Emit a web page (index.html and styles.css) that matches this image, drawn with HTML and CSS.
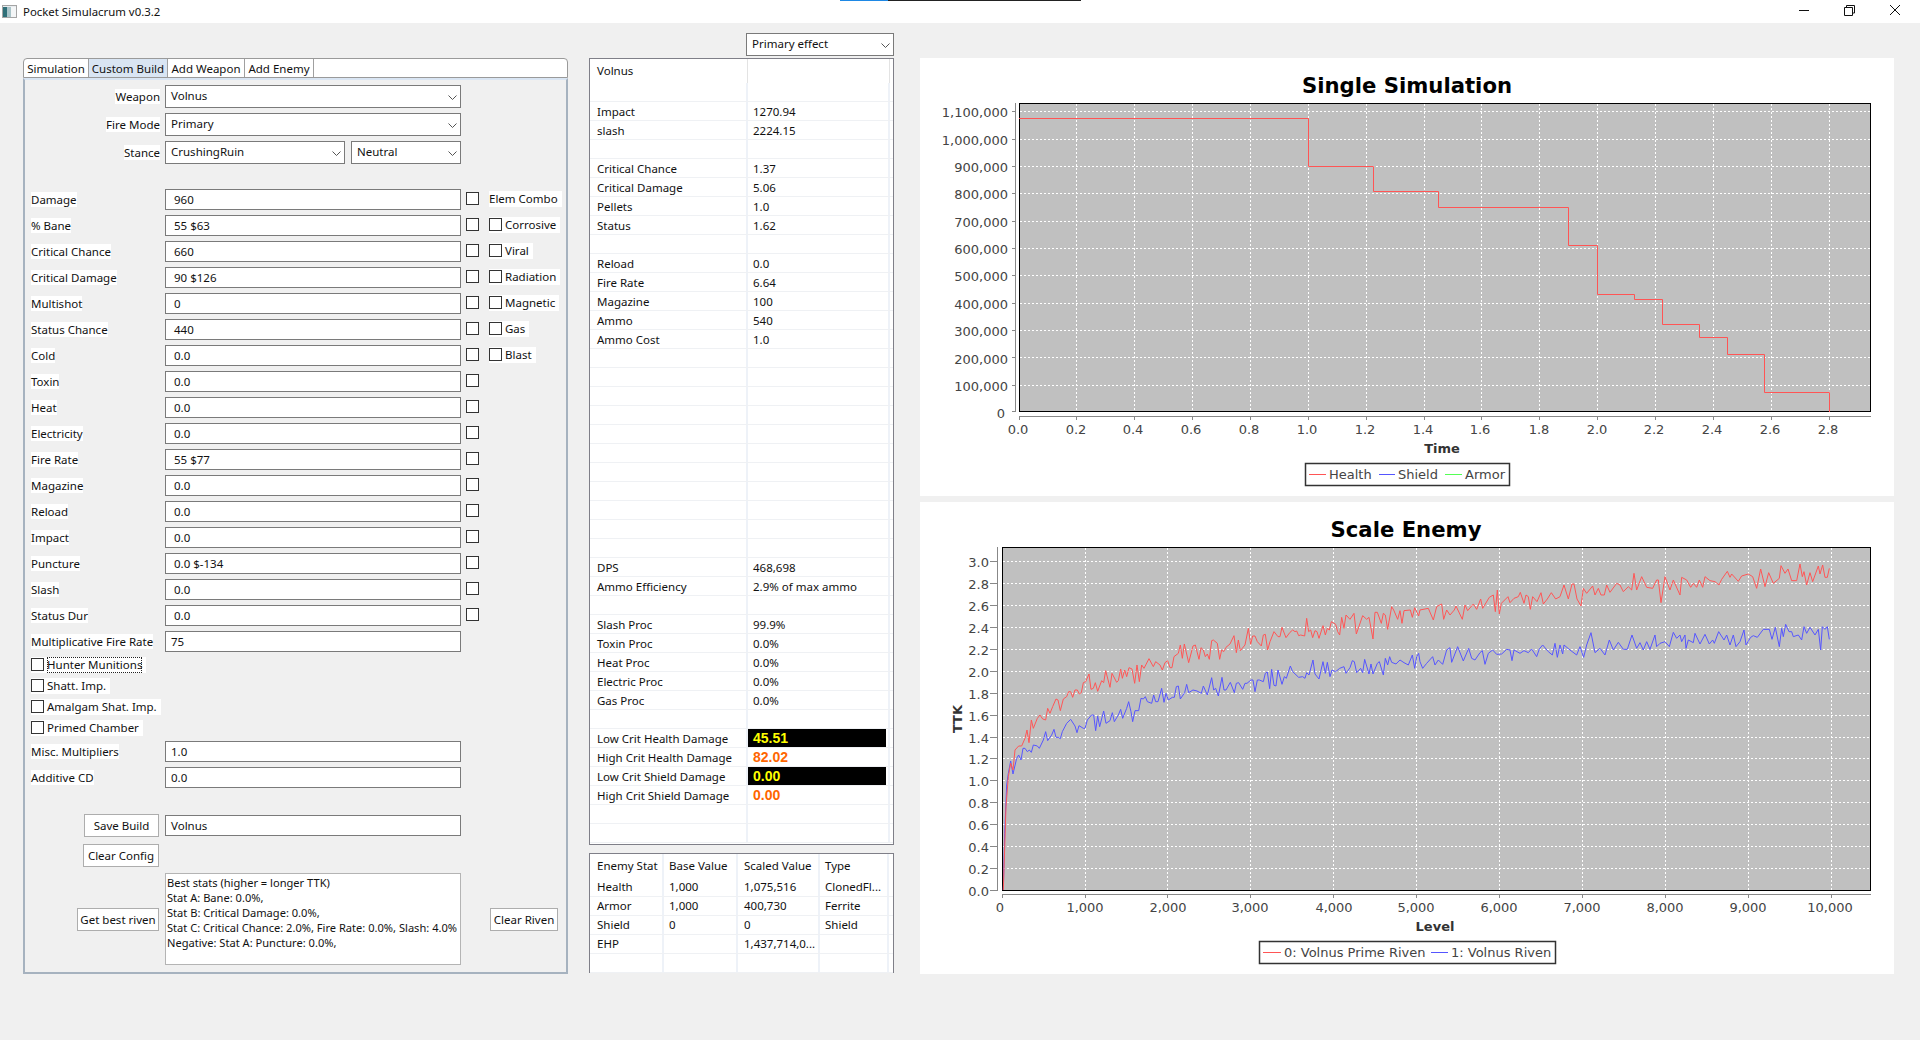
FILE: index.html
```html
<!DOCTYPE html>
<html lang="en">
<head>
<meta charset="utf-8">
<title>Pocket Simulacrum v0.3.2</title>
<link rel="stylesheet" href="styles.css">
</head>
<body>
<div class="progress"><span class="progress-blue"></span><span class="progress-dark"></span></div>
<header class="titlebar">
  <svg class="app-icon" width="15" height="13" viewBox="0 0 15 13"><rect x="0.5" y="0.5" width="14" height="12" fill="#e8ecef" stroke="#a5a5a5"/><rect x="1" y="2" width="4" height="10" fill="#2f6f78"/><rect x="5" y="2" width="4" height="10" fill="#a9c4c9"/><rect x="9" y="2" width="5" height="10" fill="#f4f6f7"/></svg>
  <span class="title-text">Pocket Simulacrum v0.3.2</span>
  <div class="win-controls">
    <svg width="46" height="23" viewBox="0 0 46 23"><path d="M18 10.5H28" stroke="#111" fill="none"/></svg>
    <svg width="46" height="23" viewBox="0 0 46 23"><path d="M17.5 7.5H25.5V15.5H17.5ZM19.5 7V5.5H27.5V13H26" stroke="#111" fill="none"/></svg>
    <svg width="46" height="23" viewBox="0 0 46 23"><path d="M17 5L27 15M27 5L17 15" stroke="#111" fill="none"/></svg>
  </div>
</header>

<main class="workspace">
  <section class="left-panel">
    <nav class="tabs">
      <span class="tab tab-sim">Simulation</span>
      <span class="tab tab-build">Custom Build</span>
      <span class="tab tab-weapon">Add Weapon</span>
      <span class="tab tab-enemy">Add Enemy</span>
    </nav>
    <div class="pane">
      <div class="combo-row"><span class="combo-label">Weapon</span><div class="combo">Volnus<svg class="chev" width="9" height="5" viewBox="0 0 9 5"><path d="M.5 .5L4.5 4.5L8.5 .5" /></svg></div></div>
      <div class="combo-row"><span class="combo-label">Fire Mode</span><div class="combo">Primary<svg class="chev" width="9" height="5" viewBox="0 0 9 5"><path d="M.5 .5L4.5 4.5L8.5 .5" /></svg></div></div>
      <div class="combo-row"><span class="combo-label">Stance</span>
        <div class="combo-pair">
          <div class="combo">CrushingRuin<svg class="chev" width="9" height="5" viewBox="0 0 9 5"><path d="M.5 .5L4.5 4.5L8.5 .5" /></svg></div>
          <div class="combo">Neutral<svg class="chev" width="9" height="5" viewBox="0 0 9 5"><path d="M.5 .5L4.5 4.5L8.5 .5" /></svg></div>
        </div>
      </div>

      <div class="fields">
        <div class="frow"><span class="flabel">Damage</span><div class="field stat">960</div><div class="checks"><span class="cb"></span><span class="extra"><span class="extra-text elem">Elem Combo</span></span></div></div>
        <div class="frow"><span class="flabel">% Bane</span><div class="field stat">55 $63</div><div class="checks"><span class="cb"></span><span class="extra"><span class="cb"></span><span class="extra-text">Corrosive</span></span></div></div>
        <div class="frow"><span class="flabel">Critical Chance</span><div class="field stat">660</div><div class="checks"><span class="cb"></span><span class="extra"><span class="cb"></span><span class="extra-text">Viral</span></span></div></div>
        <div class="frow"><span class="flabel">Critical Damage</span><div class="field stat">90 $126</div><div class="checks"><span class="cb"></span><span class="extra"><span class="cb"></span><span class="extra-text">Radiation</span></span></div></div>
        <div class="frow"><span class="flabel">Multishot</span><div class="field stat">0</div><div class="checks"><span class="cb"></span><span class="extra"><span class="cb"></span><span class="extra-text">Magnetic</span></span></div></div>
        <div class="frow"><span class="flabel">Status Chance</span><div class="field stat">440</div><div class="checks"><span class="cb"></span><span class="extra"><span class="cb"></span><span class="extra-text">Gas</span></span></div></div>
        <div class="frow"><span class="flabel">Cold</span><div class="field">0.0</div><div class="checks"><span class="cb"></span><span class="extra"><span class="cb"></span><span class="extra-text">Blast</span></span></div></div>
        <div class="frow"><span class="flabel">Toxin</span><div class="field">0.0</div><div class="checks"><span class="cb"></span></div></div>
        <div class="frow"><span class="flabel">Heat</span><div class="field">0.0</div><div class="checks"><span class="cb"></span></div></div>
        <div class="frow"><span class="flabel">Electricity</span><div class="field">0.0</div><div class="checks"><span class="cb"></span></div></div>
        <div class="frow"><span class="flabel">Fire Rate</span><div class="field">55 $77</div><div class="checks"><span class="cb"></span></div></div>
        <div class="frow"><span class="flabel">Magazine</span><div class="field">0.0</div><div class="checks"><span class="cb"></span></div></div>
        <div class="frow"><span class="flabel">Reload</span><div class="field">0.0</div><div class="checks"><span class="cb"></span></div></div>
        <div class="frow"><span class="flabel">Impact</span><div class="field">0.0</div><div class="checks"><span class="cb"></span></div></div>
        <div class="frow"><span class="flabel">Puncture</span><div class="field">0.0 $-134</div><div class="checks"><span class="cb"></span></div></div>
        <div class="frow"><span class="flabel">Slash</span><div class="field">0.0</div><div class="checks"><span class="cb"></span></div></div>
        <div class="frow"><span class="flabel">Status Dur</span><div class="field">0.0</div><div class="checks"><span class="cb"></span></div></div>
        <div class="frow"><span class="flabel">Multiplicative Fire Rate</span><div class="field plain">75</div></div>
      </div>

      <div class="toggles">
        <div class="toggle"><span class="toggle-wrap"><span class="cb"></span><span class="toggle-text focused">Hunter Munitions</span></span></div>
        <div class="toggle"><span class="toggle-wrap"><span class="cb"></span><span class="toggle-text">Shatt. Imp.</span></span></div>
        <div class="toggle"><span class="toggle-wrap"><span class="cb"></span><span class="toggle-text">Amalgam Shat. Imp.</span></span></div>
        <div class="toggle"><span class="toggle-wrap"><span class="cb"></span><span class="toggle-text">Primed Chamber</span></span></div>
      </div>

      <div class="frow"><span class="flabel">Misc. Multipliers</span><div class="field plain">1.0</div></div>
      <div class="frow"><span class="flabel">Additive CD</span><div class="field plain">0.0</div></div>

      <div class="save-row"><button class="btn save-btn">Save Build</button><div class="field plain name-field">Volnus</div></div>
      <div class="clear-row"><button class="btn clear-btn">Clear Config</button></div>
      <div class="riven-row">
        <button class="btn riven-btn">Get best riven</button>
        <div class="riven-text">Best stats (higher = longer TTK)<br>Stat A: Bane: 0.0%,<br>Stat B: Critical Damage: 0.0%,<br>Stat C: Critical Chance: 2.0%, Fire Rate: 0.0%, Slash: 4.0%<br>Negative: Stat A: Puncture: 0.0%,</div>
        <button class="btn clear-riven">Clear Riven</button>
      </div>
    </div>
  </section>

  <section class="center-panel">
    <div class="combo effect-combo">Primary effect<svg class="chev" width="9" height="5" viewBox="0 0 9 5"><path d="M.5 .5L4.5 4.5L8.5 .5" /></svg></div>
    <div class="stats">
      <div class="srow shead"><div class="c">Volnus</div><div class="c"></div></div>
      <div class="srow"><div class="c"></div><div class="c"></div></div>
      <div class="srow"><div class="c">Impact</div><div class="c">1270.94</div></div>
      <div class="srow"><div class="c">slash</div><div class="c">2224.15</div></div>
      <div class="srow"><div class="c"></div><div class="c"></div></div>
      <div class="srow"><div class="c">Critical Chance</div><div class="c">1.37</div></div>
      <div class="srow"><div class="c">Critical Damage</div><div class="c">5.06</div></div>
      <div class="srow"><div class="c">Pellets</div><div class="c">1.0</div></div>
      <div class="srow"><div class="c">Status</div><div class="c">1.62</div></div>
      <div class="srow"><div class="c"></div><div class="c"></div></div>
      <div class="srow"><div class="c">Reload</div><div class="c">0.0</div></div>
      <div class="srow"><div class="c">Fire Rate</div><div class="c">6.64</div></div>
      <div class="srow"><div class="c">Magazine</div><div class="c">100</div></div>
      <div class="srow"><div class="c">Ammo</div><div class="c">540</div></div>
      <div class="srow"><div class="c">Ammo Cost</div><div class="c">1.0</div></div>
      <div class="srow"><div class="c"></div><div class="c"></div></div>
      <div class="srow"><div class="c"></div><div class="c"></div></div>
      <div class="srow"><div class="c"></div><div class="c"></div></div>
      <div class="srow"><div class="c"></div><div class="c"></div></div>
      <div class="srow"><div class="c"></div><div class="c"></div></div>
      <div class="srow"><div class="c"></div><div class="c"></div></div>
      <div class="srow"><div class="c"></div><div class="c"></div></div>
      <div class="srow"><div class="c"></div><div class="c"></div></div>
      <div class="srow"><div class="c"></div><div class="c"></div></div>
      <div class="srow"><div class="c"></div><div class="c"></div></div>
      <div class="srow"><div class="c"></div><div class="c"></div></div>
      <div class="srow"><div class="c">DPS</div><div class="c">468,698</div></div>
      <div class="srow"><div class="c">Ammo Efficiency</div><div class="c">2.9% of max ammo</div></div>
      <div class="srow"><div class="c"></div><div class="c"></div></div>
      <div class="srow"><div class="c">Slash Proc</div><div class="c">99.9%</div></div>
      <div class="srow"><div class="c">Toxin Proc</div><div class="c">0.0%</div></div>
      <div class="srow"><div class="c">Heat Proc</div><div class="c">0.0%</div></div>
      <div class="srow"><div class="c">Electric Proc</div><div class="c">0.0%</div></div>
      <div class="srow"><div class="c">Gas Proc</div><div class="c">0.0%</div></div>
      <div class="srow"><div class="c"></div><div class="c"></div></div>
      <div class="srow"><div class="c">Low Crit Health Damage</div><div class="c c-low"><span class="hi-low">45.51</span></div></div>
      <div class="srow"><div class="c">High Crit Health Damage</div><div class="c c-high">82.02</div></div>
      <div class="srow"><div class="c">Low Crit Shield Damage</div><div class="c c-low"><span class="hi-low">0.00</span></div></div>
      <div class="srow"><div class="c">High Crit Shield Damage</div><div class="c c-high">0.00</div></div>
      <div class="srow"><div class="c"></div><div class="c"></div></div>
      <div class="srow"><div class="c"></div><div class="c"></div></div>
    </div>
    <div class="enemy">
      <div class="erow ehead"><div class="e">Enemy Stat</div><div class="e">Base Value</div><div class="e">Scaled Value</div><div class="e">Type</div></div>
      <div class="erow"><div class="e">Health</div><div class="e">1,000</div><div class="e">1,075,516</div><div class="e">ClonedFl...</div></div>
      <div class="erow"><div class="e">Armor</div><div class="e">1,000</div><div class="e">400,730</div><div class="e">Ferrite</div></div>
      <div class="erow"><div class="e">Shield</div><div class="e">0</div><div class="e">0</div><div class="e">Shield</div></div>
      <div class="erow"><div class="e">EHP</div><div class="e"></div><div class="e">1,437,714,0...</div><div class="e"></div></div>
      <div class="erow"><div class="e"></div><div class="e"></div><div class="e"></div><div class="e"></div></div>
    </div>
  </section>

  <section class="charts">
    <svg class="chart chart-a" width="974" height="438" viewBox="920 58 974 438">
      <text class="ch-title" x="1407" y="93" text-anchor="middle">Single Simulation</text>
      <rect class="plot" x="1019.5" y="103.5" width="851" height="308"/>
      <path class="grid" d="M1020 111.5H1870M1020 139.5H1870M1020 166.5H1870M1020 193.5H1870M1020 221.5H1870M1020 248.5H1870M1020 275.5H1870M1020 303.5H1870M1020 330.5H1870M1020 357.5H1870M1020 385.5H1870M1076.5 104V411M1134.5 104V411M1192.5 104V411M1250.5 104V411M1308.5 104V411M1366.5 104V411M1424.5 104V411M1481.5 104V411M1539.5 104V411M1597.5 104V411M1655.5 104V411M1713.5 104V411M1771.5 104V411M1829.5 104V411"/>
      <polyline class="s-red" points="1019,118.5 1308.5,118.5 1308.5,166.5 1373.5,166.5 1373.5,191.5 1438.5,191.5 1438.5,207.5 1568.5,207.5 1568.5,245.5 1597.5,245.5 1597.5,294.5 1634.5,294.5 1634.5,299.5 1662.5,299.5 1662.5,324.5 1699.5,324.5 1699.5,337.5 1727.5,337.5 1727.5,354.5 1764.5,354.5 1764.5,392.5 1829.5,392.5 1829.5,412"/>
      <path class="axis" d="M1015.5 103V412M1019 416.5H1871M1012 111.5H1015M1012 139.5H1015M1012 166.5H1015M1012 193.5H1015M1012 221.5H1015M1012 248.5H1015M1012 275.5H1015M1012 303.5H1015M1012 330.5H1015M1012 357.5H1015M1012 385.5H1015M1012 411.5H1015M1019.5 416V420M1076.5 416V420M1134.5 416V420M1192.5 416V420M1250.5 416V420M1308.5 416V420M1366.5 416V420M1424.5 416V420M1481.5 416V420M1539.5 416V420M1597.5 416V420M1655.5 416V420M1713.5 416V420M1771.5 416V420M1829.5 416V420"/>
      <g class="ticks" text-anchor="end">
        <text x="1008" y="117">1,100,000</text><text x="1008" y="145">1,000,000</text><text x="1008" y="172">900,000</text><text x="1008" y="199">800,000</text><text x="1008" y="227">700,000</text><text x="1008" y="254">600,000</text><text x="1008" y="281">500,000</text><text x="1008" y="309">400,000</text><text x="1008" y="336">300,000</text><text x="1008" y="364">200,000</text><text x="1008" y="391">100,000</text><text x="1005" y="418">0</text>
      </g>
      <g class="ticks" text-anchor="middle">
        <text x="1018" y="434">0.0</text><text x="1076" y="434">0.2</text><text x="1133" y="434">0.4</text><text x="1191" y="434">0.6</text><text x="1249" y="434">0.8</text><text x="1307" y="434">1.0</text><text x="1365" y="434">1.2</text><text x="1423" y="434">1.4</text><text x="1480" y="434">1.6</text><text x="1539" y="434">1.8</text><text x="1597" y="434">2.0</text><text x="1654" y="434">2.2</text><text x="1712" y="434">2.4</text><text x="1770" y="434">2.6</text><text x="1828" y="434">2.8</text>
      </g>
      <text class="ax-label" x="1442" y="453" text-anchor="middle">Time</text>
      <rect class="legend" x="1305.5" y="463.5" width="204" height="22"/>
      <path class="s-red" d="M1309 474.5H1326"/><text class="ticks" x="1329" y="479">Health</text>
      <path class="s-blue" d="M1379 474.5H1395"/><text class="ticks" x="1398" y="479">Shield</text>
      <path class="s-green" d="M1445 474.5H1462"/><text class="ticks" x="1465" y="479">Armor</text>
    </svg>

    <svg class="chart chart-b" width="974" height="472" viewBox="920 502 974 472">
      <text class="ch-title" x="1406" y="537" text-anchor="middle">Scale Enemy</text>
      <rect class="plot" x="1002.5" y="547.5" width="868" height="343"/>
      <path class="grid" d="M1003 561.5H1870M1003 583.5H1870M1003 605.5H1870M1003 627.5H1870M1003 649.5H1870M1003 671.5H1870M1003 693.5H1870M1003 715.5H1870M1003 737.5H1870M1003 758.5H1870M1003 780.5H1870M1003 802.5H1870M1003 824.5H1870M1003 846.5H1870M1003 868.5H1870M1085.5 548V890M1167.5 548V890M1250.5 548V890M1333.5 548V890M1416.5 548V890M1499.5 548V890M1582.5 548V890M1665.5 548V890M1748.5 548V890M1831.5 548V890"/>
      <g transform="translate(920 500) scale(.33333)">
        <polyline class="s-thin s-blue" points="250,1170 254,1000 260,855 265,820 272,783 279,822 290,775 296,765 303,780 309,745 315,745 322,755 328,750 334,757 340,735 352,738 358,745 370,720 377,695 383,722 395,705 402,688 408,712 415,712 421,716 427,695 440,670 452,658 465,678 471,698 477,677 490,685 495,685 502,660 515,645 521,645 527,692 533,648 539,680 551,633 558,670 570,662 577,638 583,665 595,645 602,628 608,655 620,625 626,605 633,635 638,665 645,632 656,632 663,595 670,597 676,590 682,605 695,610 701,585 707,605 714,605 725,565 732,607 738,580 745,600 757,592 763,592 769,560 775,558 781,597 794,578 800,553 806,578 819,570 831,573 844,580 850,558 862,585 875,533 881,570 887,565 895,588 906,532 912,570 918,570 931,547 943,578 949,550 956,548 968,568 975,550 981,550 993,540 999,540 1005,575 1012,540 1018,540 1030,545 1036,520 1042,516 1049,566 1055,508 1062,556 1068,558 1074,510 1086,553 1093,530 1099,535 1111,498 1118,515 1136,532 1148,530 1155,535 1160,518 1167,525 1179,480 1185,522 1197,537 1209,485 1216,520 1222,487 1230,530 1236,510 1247,515 1259,505 1272,500 1278,520 1290,503 1297,482 1303,485 1310,518 1322,505 1328,518 1334,478 1347,522 1353,492 1359,522 1372,490 1378,485 1390,525 1396,475 1403,495 1409,470 1415,487 1428,492 1440,480 1452,488 1465,495 1477,465 1484,505 1490,470 1496,460 1500,485 1508,505 1520,490 1538,470 1545,495 1555,480 1568,493 1580,450 1590,443 1595,487 1613,440 1630,483 1646,445 1655,475 1665,480 1680,458 1687,452 1695,493 1705,460 1718,450 1730,463 1745,462 1760,448 1770,450 1776,482 1782,450 1800,460 1812,452 1825,458 1835,447 1850,470 1858,447 1868,435 1885,455 1897,465 1905,430 1912,472 1920,435 1928,462 1932,435 1950,450 1970,465 1980,440 1991,472 2000,435 2013,398 2025,458 2040,445 2055,465 2068,420 2080,450 2095,427 2110,448 2122,448 2136,405 2150,445 2160,428 2170,450 2180,425 2190,448 2205,405 2210,440 2220,430 2235,425 2248,440 2260,397 2270,415 2280,405 2285,425 2295,405 2298,445 2305,420 2320,428 2325,400 2340,432 2355,403 2368,432 2378,420 2383,430 2396,395 2412,420 2420,405 2430,435 2440,405 2448,440 2460,425 2472,390 2478,435 2492,412 2500,407 2512,412 2530,388 2548,388 2556,418 2566,382 2578,440 2585,385 2590,410 2597,373 2607,395 2615,395 2620,410 2635,405 2645,420 2652,380 2660,400 2670,382 2685,405 2695,388 2702,450 2707,380 2715,388 2722,380 2728,418"/>
        <polyline class="s-thin s-red" points="250,1170 258,920 265,830 272,790 279,810 285,750 296,738 305,738 315,715 321,690 327,728 334,660 340,685 352,655 360,645 368,657 377,660 383,625 390,640 398,620 408,597 414,600 421,632 430,597 440,590 446,575 452,575 458,592 465,570 472,570 478,582 484,578 490,548 497,545 507,522 513,568 520,565 526,548 533,574 545,542 551,548 557,512 570,562 576,520 590,547 595,542 602,507 607,535 614,510 620,530 627,503 636,507 644,550 651,495 658,545 665,495 672,505 687,476 700,500 707,485 720,495 727,510 735,488 743,482 750,503 756,503 762,470 775,460 781,435 787,475 793,432 806,488 819,438 826,435 837,478 843,443 850,450 856,470 862,462 868,478 875,422 880,420 892,430 899,478 905,450 911,455 918,442 930,432 942,407 949,458 955,420 961,452 975,435 985,385 992,433 998,408 1005,408 1012,425 1024,438 1030,405 1036,403 1043,450 1050,425 1062,395 1074,410 1080,410 1086,382 1098,413 1110,397 1118,390 1125,395 1130,393 1136,407 1142,405 1154,408 1160,355 1166,395 1172,390 1178,413 1185,392 1191,395 1197,415 1209,377 1216,405 1222,385 1228,390 1234,365 1247,373 1253,395 1259,405 1265,352 1272,385 1278,345 1290,358 1302,340 1309,402 1328,347 1340,358 1347,352 1359,417 1365,337 1372,337 1384,370 1390,340 1396,345 1403,388 1415,320 1421,330 1433,358 1440,332 1446,370 1452,332 1471,330 1477,352 1484,323 1496,348 1500,330 1525,325 1540,360 1550,320 1565,312 1571,358 1580,330 1590,345 1603,330 1608,318 1627,358 1635,315 1643,332 1660,312 1670,328 1682,297 1688,325 1708,292 1720,285 1726,335 1732,270 1738,342 1744,310 1764,290 1770,308 1782,295 1795,290 1801,277 1812,310 1818,285 1825,290 1831,328 1838,290 1851,305 1863,278 1870,312 1882,297 1894,278 1907,297 1920,290 1932,255 1945,297 1956,252 1962,252 1971,297 1983,318 1990,265 2000,280 2018,258 2025,285 2035,265 2043,285 2053,285 2060,255 2070,277 2090,250 2100,255 2110,275 2125,260 2135,270 2142,220 2150,270 2165,230 2180,262 2198,265 2210,240 2215,240 2223,308 2235,230 2250,270 2260,240 2280,285 2285,232 2300,240 2312,262 2320,250 2330,262 2338,240 2348,262 2355,230 2370,242 2385,245 2397,255 2405,238 2422,214 2430,232 2435,222 2455,244 2465,228 2485,222 2498,230 2510,265 2522,207 2535,260 2546,218 2560,250 2578,235 2583,197 2595,220 2604,207 2615,242 2630,242 2640,192 2647,230 2652,215 2660,255 2670,218 2678,245 2695,198 2700,222 2708,195 2715,232 2722,232 2728,205"/>
      </g>
      <path class="axis" d="M997.5 547V891M1002 894.5H1871M990 561.5H997M990 583.5H997M990 605.5H997M990 627.5H997M990 649.5H997M990 671.5H997M990 693.5H997M990 715.5H997M990 737.5H997M990 758.5H997M990 780.5H997M990 802.5H997M990 824.5H997M990 846.5H997M990 868.5H997M990 890.5H997M1002.5 894V898M1085.5 894V898M1167.5 894V898M1250.5 894V898M1333.5 894V898M1416.5 894V898M1499.5 894V898M1582.5 894V898M1665.5 894V898M1748.5 894V898M1831.5 894V898"/>
      <g class="ticks" text-anchor="end">
        <text x="989" y="567">3.0</text><text x="989" y="589">2.8</text><text x="989" y="611">2.6</text><text x="989" y="633">2.4</text><text x="989" y="655">2.2</text><text x="989" y="677">2.0</text><text x="989" y="699">1.8</text><text x="989" y="721">1.6</text><text x="989" y="743">1.4</text><text x="989" y="764">1.2</text><text x="989" y="786">1.0</text><text x="989" y="808">0.8</text><text x="989" y="830">0.6</text><text x="989" y="852">0.4</text><text x="989" y="874">0.2</text><text x="989" y="896">0.0</text>
      </g>
      <g class="ticks" text-anchor="middle">
        <text x="1000" y="912">0</text><text x="1085" y="912">1,000</text><text x="1168" y="912">2,000</text><text x="1250" y="912">3,000</text><text x="1334" y="912">4,000</text><text x="1416" y="912">5,000</text><text x="1499" y="912">6,000</text><text x="1582" y="912">7,000</text><text x="1665" y="912">8,000</text><text x="1748" y="912">9,000</text><text x="1830" y="912">10,000</text>
      </g>
      <text class="ax-label" x="1435" y="931" text-anchor="middle">Level</text>
      <text class="ax-label" x="0" y="0" text-anchor="middle" transform="translate(962 719) rotate(-90)">TTK</text>
      <rect class="legend" x="1259.5" y="941.5" width="296" height="22"/>
      <path class="s-red" d="M1263 952.5H1281"/><text class="ticks" x="1284" y="957">0: Volnus Prime Riven</text>
      <path class="s-blue" d="M1431 952.5H1448"/><text class="ticks" x="1451" y="957">1: Volnus Riven</text>
    </svg>
  </section>
</main>
</body>
</html>
```
FILE: styles.css
```css
* { box-sizing: border-box; }
html, body { margin: 0; padding: 0; }
body {
  width: 1920px;
  height: 1040px;
  overflow: hidden;
  background: #f0f0f0;
  color: #111;
  font-family: "Noto Sans", "Open Sans", sans-serif;
  font-size: 11.5px;
  line-height: 15px;
  position: relative;
}

/* title bar */
.progress { position: absolute; left: 840px; top: 0; display: flex; height: 1px; }
.progress-blue { width: 48px; background: #1e88e5; }
.progress-dark { width: 193px; background: #222; }
.titlebar { height: 23px; background: #fff; display: flex; align-items: center; padding-left: 2px; }
.app-icon { flex: none; }
.title-text { margin-left: 6px; font-size: 11.4px; }
.win-controls { margin-left: auto; display: flex; padding-right: 1px; }
.win-controls svg { display: block; }

/* main */
.workspace { display: flex; align-items: flex-start; padding: 10px 0 0 23px; }
.left-panel { width: 545px; margin-top: 25px; flex: none; }
.center-panel { width: 305px; margin-left: 21px; flex: none; display: flex; flex-direction: column; }
.charts { width: 974px; margin: 25px 0 0 26px; flex: none; display: flex; flex-direction: column; gap: 6px; }

/* tabs */
.tabs { height: 20px; display: flex; background: #fff; border: 1px solid #9a9a9a; border-radius: 4px 4px 0 0; }
.tab { display: flex; align-items: center; justify-content: center; border-right: 1px solid #a0a0a0; height: 18px; white-space: nowrap; }
.tab-sim { width: 65px; }
.tab-build { width: 79px; background: #d9e5f3; }
.tab-weapon { width: 77px; }
.tab-enemy { width: 69px; }

.pane { height: 896px; border: 2px solid #a6b2bf; border-top: 2px solid #d9e5f3; padding: 5px 0 0 6px; background: #f0f0f0; }

/* combos */
.combo-row { display: grid; grid-template-columns: 129px 296px; column-gap: 5px; height: 23px; margin-bottom: 5px; align-items: center; }
.combo-label { justify-self: end; background: #fff; }
.combo { position: relative; height: 23px; background: #fff; border: 1px solid #7a7a7a; padding: 0 5px; line-height: 19px; white-space: nowrap; }
.chev { position: absolute; right: 3px; top: 9px; }
.chev path { fill: none; stroke: #555; }
.combo-pair { display: grid; grid-template-columns: 180px 110px; column-gap: 6px; }
.effect-combo { width: 148px; align-self: flex-end; margin-bottom: 2px; }

/* stat fields */
.fields { margin-top: 25px; }
.frow { display: grid; grid-template-columns: 134px 296px auto; height: 21px; margin-bottom: 5px; align-items: center; }
.flabel { justify-self: start; background: #fff; white-space: nowrap; }
.field { height: 21px; background: #fff; border: 1px solid #7a7a7a; padding-left: 8px; line-height: 19px; white-space: nowrap; }
.field.plain { padding-left: 5px; }
.checks { display: flex; align-items: flex-start; padding-left: 5px; height: 21px; }
.cb { display: block; flex: none; width: 13px; height: 13px; margin-top: 3px; background: #fff; border: 1px solid #333; }
.extra { display: flex; margin-left: 10px; margin-top: 2px; background: #fff; height: 16px; padding-right: 4px; }
.extra .cb { margin-top: 1px; }
.extra-text { margin-left: 3px; white-space: nowrap; }
.extra-text.elem { margin-left: 0; }

/* toggles */
.toggles { display: flex; flex-direction: column; }
.toggle { height: 21px; display: flex; align-items: flex-start; }
.toggle-wrap { display: flex; background: #fff; padding-right: 4px; height: 16px; }
.toggle-wrap .cb { margin-top: 1px; }
.toggle-text { margin-left: 3px; white-space: nowrap; }
.toggle-text.focused { outline: 1px dotted #222; outline-offset: -1px; }

/* buttons */
.btn { font: inherit; color: inherit; background: #fff; border: 1px solid #adadad; margin: 0; height: 23px; padding: 0; white-space: nowrap; }
.save-row { display: grid; grid-template-columns: 128px 296px; column-gap: 6px; margin-top: 26px; height: 23px; align-items: center; }
.save-btn { width: 75px; justify-self: end; }
.clear-row { display: grid; grid-template-columns: 128px; margin-top: 7px; }
.clear-btn { width: 76px; justify-self: end; }
.riven-row { display: grid; grid-template-columns: 128px 296px auto; column-gap: 6px; margin-top: 6px; align-items: center; }
.riven-btn { width: 82px; justify-self: end; }
.riven-text { height: 92px; background: #fff; border: 1px solid #b4b4b4; padding: 1px 0 0 1px; font-size: 11.1px; white-space: nowrap; overflow: hidden; }
.clear-riven { width: 68px; margin-left: 23px; }

/* stats table */
.stats { height: 787px; background: #fff; border: 1px solid #7f7f88; }
.srow { display: grid; grid-template-columns: 158px 142px 1fr; height: 19px; border-bottom: 1px solid #eff1f4; line-height: 19px; }
.srow.shead { height: 24px; border-bottom: 0; line-height: 24px; }
.shead .c { border-right: 1px solid #e3e3e3; height: 24px; }
.c { padding-left: 5px; border-right: 2px solid #eef2f8; height: 18px; white-space: nowrap; overflow: hidden; }
.c:first-child { padding-left: 7px; }
.c-high, .c-low { font-family: "Liberation Sans", Arial, sans-serif; font-weight: 700; font-size: 14px; padding-left: 0; }
.c-high { color: #ff6600; padding-left: 5px; }
.hi-low { display: block; height: 18px; width: 138px; background: #000; color: #ffff00; padding-left: 5px; line-height: 18px; }

/* enemy table */
.enemy { height: 120px; margin-top: 8px; background: #fff; border: 1px solid #7f7f88; }
.erow { display: grid; grid-template-columns: 74px 74px 82px 69px 1fr; height: 19px; line-height: 18px; border-bottom: 1px solid #eff1f4; }
.ehead { height: 24px; line-height: 23px; border-bottom: 0; }
.e { padding-left: 5px; border-right: 2px solid #eef2f8; white-space: nowrap; overflow: hidden; }
.e:first-child { padding-left: 7px; }
.e:nth-child(3) { padding-left: 6px; }

/* charts */
.chart { display: block; background: #fff; }
.ch-title { font-family: "DejaVu Sans", sans-serif; font-weight: 700; font-size: 21.2px; fill: #000; }
.ax-label { font-family: "DejaVu Sans", sans-serif; font-weight: 700; font-size: 13px; fill: #333; }
.ticks { font-family: "DejaVu Sans", sans-serif; font-size: 13px; fill: #444; }
.plot { fill: #c0c0c0; stroke: #000; shape-rendering: crispEdges; }
.grid { stroke: #fff; stroke-dasharray: 2 2; fill: none; shape-rendering: crispEdges; }
.axis { stroke: #888; fill: none; shape-rendering: crispEdges; }
.s-red { stroke: #ff5555; fill: none; }
.s-blue { stroke: #5555ff; fill: none; }
.s-green { stroke: #55ff55; fill: none; }
.s-thin { stroke-width: 3; }
.legend { fill: #fff; stroke: #333; stroke-width: 1.5; }
```
